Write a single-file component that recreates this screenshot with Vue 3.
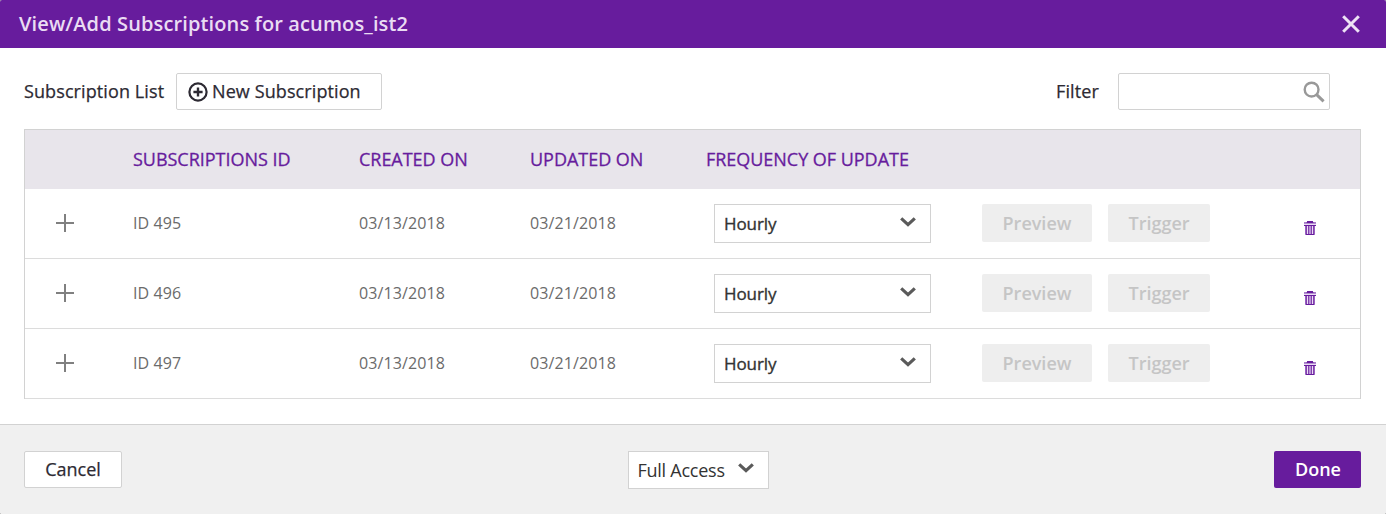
<script setup>
const rows = [
  { id: 'ID 495', created: '03/13/2018', updated: '03/21/2018' },
  { id: 'ID 496', created: '03/13/2018', updated: '03/21/2018' },
  { id: 'ID 497', created: '03/13/2018', updated: '03/21/2018' },
]
</script>

<template>
  <div class="dialog">
    <header class="titlebar">
      <h1 class="title">View/Add Subscriptions for acumos_ist2</h1>
      <svg class="close" width="20" height="20" viewBox="0 0 20 20">
        <path d="M2.2 2.2 17.8 17.8M17.8 2.2 2.2 17.8" fill="none" stroke="#ede2f5" stroke-width="3" />
      </svg>
    </header>

    <main class="content">
      <div class="toolbar">
        <span class="list-label">Subscription List</span>
        <button class="new-btn">
          <svg width="20" height="20" viewBox="0 0 20 20" fill="none" stroke="#2d2a33">
            <circle cx="10" cy="10" r="8.6" stroke-width="2.2" />
            <path d="M10 5.4v9.2M5.4 10h9.2" stroke-width="2.4" />
          </svg>
          <span class="new-text">New Subscription</span>
        </button>
        <span class="filter-label">Filter</span>
        <div class="search">
          <svg width="22" height="22" viewBox="0 0 22 22" fill="none" stroke="#999">
            <circle cx="8.6" cy="8.6" r="6.9" stroke-width="2.4" />
            <path d="M13.6 13.6 20.6 20.4" stroke-width="3" />
          </svg>
        </div>
      </div>

      <section class="table">
        <div class="row head">
          <span></span>
          <span class="h-id">SUBSCRIPTIONS ID</span>
          <span class="h-created">CREATED ON</span>
          <span class="h-updated">UPDATED ON</span>
          <span class="h-freq">FREQUENCY OF UPDATE</span>
        </div>
        <div v-for="row in rows" :key="row.id" class="row body-row">
          <svg class="plus" width="18" height="18" viewBox="0 0 18 18">
            <path d="M9 0v18M0 9h18" fill="none" stroke="#808080" stroke-width="2" />
          </svg>
          <span class="cell-id">{{ row.id }}</span>
          <span class="cell-date">{{ row.created }}</span>
          <span class="cell-date">{{ row.updated }}</span>
          <div class="select freq">
            <span class="hourly">Hourly</span>
            <svg width="16" height="10" viewBox="0 0 16 10">
              <path d="M1.2 1.4 8 7.6l6.8-6.2" fill="none" stroke="#5a5a5a" stroke-width="3.2" />
            </svg>
          </div>
          <div class="actions">
            <button class="disabled preview"><span>Preview</span></button>
            <button class="disabled trigger"><span>Trigger</span></button>
          </div>
          <svg class="trash" width="12" height="14" viewBox="0 0 12 14" shape-rendering="crispEdges">
            <path fill="#671c9d" d="M3 0h6v1H3z" />
            <path fill="#8f5ab8" d="M2 1h8v1H2z" />
            <path fill="#a77bc8" d="M0 1h2v1H0zM10 1h2v1h-2z" />
            <path fill="#671c9d" d="M3 1h6v1H3z" />
            <path fill="#b28cd0" d="M0 2h12v1H0z" />
            <path fill="#eadcf3" d="M0 3h12v1H0z" />
            <path fill="#671c9d" d="M0 4h12v1H0z" />
            <path fill="#b892d4" d="M1 5h10v8H1z" />
            <path fill="#9660be" d="M1 5h1v8H1zM10 5h1v8h-1z" />
            <path fill="#8340b0" d="M2 5h1v8H2zM4 5h1v8H4zM7 5h1v8H7zM9 5h1v8H9z" />
            <path fill="#eadcf3" d="M3 5h1v8H3zM8 5h1v8H8z" />
            <path fill="#a77bc8" d="M1 13h1v1H1zM10 13h1v1h-1z" />
            <path fill="#671c9d" d="M2 13h8v1H2z" />
          </svg>
        </div>
      </section>
    </main>

    <footer class="footer">
      <button class="cancel"><span>Cancel</span></button>
      <div class="select access">
        <span class="full">Full Access</span>
        <svg width="16" height="10" viewBox="0 0 16 10">
          <path d="M1.2 1.4 8 7.6l6.8-6.2" fill="none" stroke="#5a5a5a" stroke-width="3.2" />
        </svg>
      </div>
      <button class="done"><span>Done</span></button>
    </footer>
  </div>
</template>

<style>
body {
  background: #888;
}
</style>

<style scoped>
* {
  box-sizing: border-box;
}
.dialog {
  width: 1386px;
  height: 514px;
  display: flex;
  flex-direction: column;
  border-radius: 2px;
  overflow: hidden;
  background: #fff;
  font-family: "Open Sans", "Noto Sans", sans-serif;
  font-size: 18px;
  color: #2d2a33;
  white-space: nowrap;
}
button {
  font: inherit;
  color: inherit;
  letter-spacing: inherit;
  padding: 0;
  border: 1px solid #d2d2d2;
  border-radius: 2px;
  background: #fff;
  display: flex;
  align-items: center;
  justify-content: center;
}
.titlebar {
  height: 48px;
  flex: none;
  display: flex;
  align-items: center;
  justify-content: space-between;
  padding: 0 25px 0 19px;
  background: #671c9d;
}
.title {
  margin: 0;
  font-size: 20px;
  line-height: 24px;
  font-weight: 600;
  letter-spacing: 0.12px;
  color: #eadcf3;
}
.content {
  height: 376px;
  flex: none;
  padding: 25px 25px 0 24px;
}
.toolbar {
  display: flex;
  align-items: center;
  height: 37px;
  padding-right: 31px;
  margin-bottom: 19px;
  letter-spacing: 0.1px;
}
.list-label,
.new-text,
.filter-label,
.cancel span {
  padding-bottom: 2px;
  -webkit-text-stroke: 0.25px currentColor;
}
.list-label {
  width: 152px;
}
.new-btn {
  width: 206px;
  height: 37px;
  justify-content: flex-start;
  padding-left: 11px;
  gap: 4px;
}
.filter-label {
  margin-left: auto;
  width: 62px;
}
.search {
  width: 212px;
  height: 37px;
  border: 1px solid #d2d2d2;
  border-radius: 2px;
  display: flex;
  align-items: center;
  justify-content: flex-end;
  padding-right: 4px;
}
.table {
  border: 1px solid #d2d2d2;
  border-bottom: 0;
}
.row {
  display: grid;
  grid-template-columns: 108px 226px 171px 176px 276px 322px 1fr;
  align-items: center;
}
.head {
  height: 59px;
  padding-bottom: 2px;
  background: #e8e5eb;
  color: #671c9d;
  letter-spacing: -0.03px;
  -webkit-text-stroke: 0.3px currentColor;
}
.body-row {
  height: 70px;
  padding-bottom: 1px;
  border-bottom: 1px solid #dcdcdc;
  font-size: 16px;
  color: #6b6b6b;
}
.plus {
  margin-left: 31px;
}
.cell-id,
.cell-date {
  line-height: 24px;
  letter-spacing: 0.1px;
}
.select {
  display: flex;
  align-items: center;
  justify-content: space-between;
  border: 1px solid #d2d2d2;
  background: #fff;
  color: #333;
}
.select svg {
  margin-top: -4px;
}
.freq {
  width: 217px;
  height: 39px;
  margin-top: 1px;
  margin-left: 8px;
  padding: 0 14px 0 9px;
}
.hourly {
  font-size: 17px;
  letter-spacing: -0.1px;
  -webkit-text-stroke: 0.35px currentColor;
}
.actions {
  display: flex;
  gap: 16px;
}
.disabled {
  height: 38px;
  border: 0;
  background: #eee;
  color: #c5c5c5;
  font-size: 18px;
  font-weight: 600;
}
.preview {
  width: 110px;
}
.trigger {
  width: 102px;
}
.trash {
  margin-top: 10px;
}
.footer {
  height: 90px;
  display: flex;
  align-items: flex-start;
  justify-content: space-between;
  padding: 26px 25px 0 24px;
  border-top: 1px solid #d2d2d2;
  background: #f0f0f0;
}
.cancel {
  width: 98px;
  height: 37px;
}
.access {
  width: 141px;
  height: 38px;
  padding: 0 14px 0 9px;
  letter-spacing: -0.25px;
}
.done {
  width: 87px;
  height: 37px;
  padding: 0 0 2px 1px;
  border: 0;
  background: #671c9d;
  color: #fff;
  font-weight: 600;
}
</style>
